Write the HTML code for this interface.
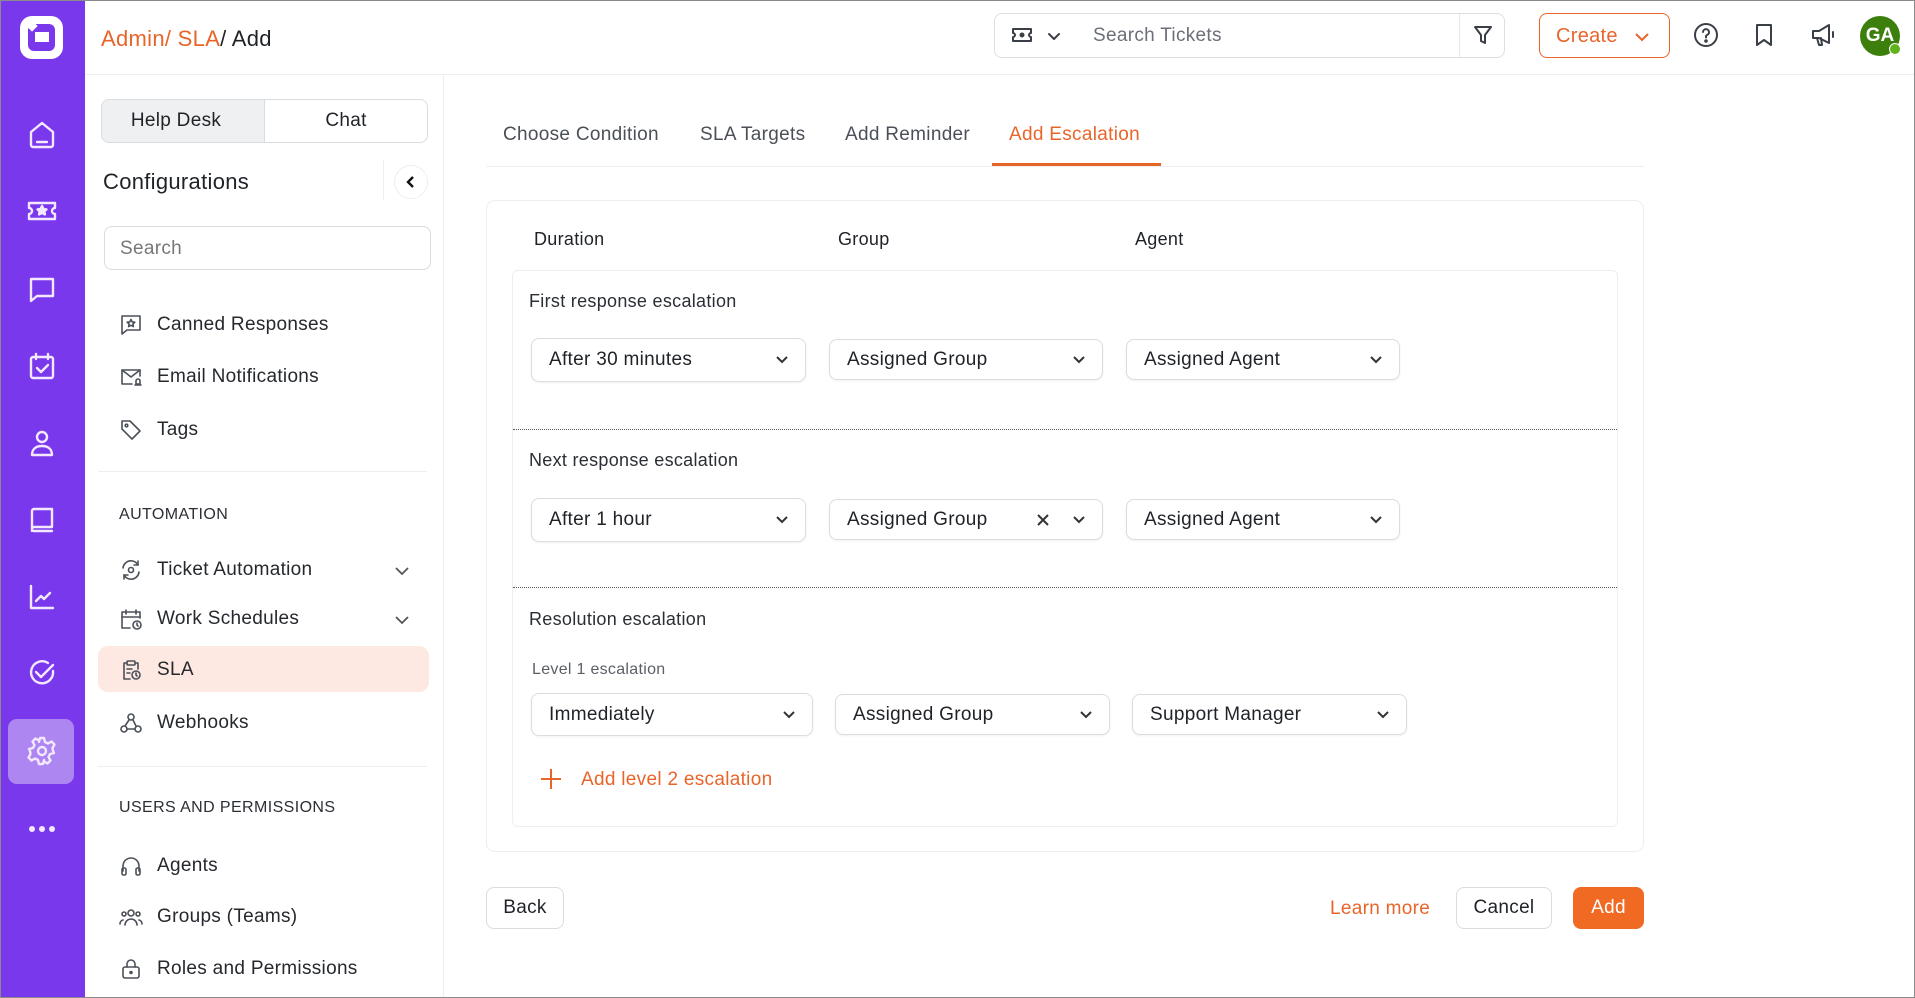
<!DOCTYPE html>
<html><head><meta charset="utf-8">
<style>
*{box-sizing:border-box;margin:0;padding:0}
body{width:1915px;height:998px;overflow:hidden;background:#fff;font-family:"Liberation Sans",Arial,sans-serif;color:#1f2328;position:relative;letter-spacing:.3px}
.a{position:absolute}
.side{left:0;top:0;width:85px;height:998px;background:#7a38ec}
.nav{left:22px;width:40px;height:40px}
.nav svg{width:40px;height:40px;fill:none;stroke:#f3e8ff;stroke-width:2.4;stroke-linecap:round;stroke-linejoin:round}
.txt{white-space:nowrap}
.dd{border:1px solid #d9dce1;border-radius:8px;box-shadow:0 1px 2px rgba(0,0,0,.06);font-size:19px;color:#1f2328;display:flex;align-items:center;padding-left:17px}
.dd svg{position:absolute;right:16px;top:50%;margin-top:-7px;width:14px;height:14px;fill:none;stroke:#333;stroke-width:2}
.item{left:119px;display:flex;align-items:center;font-size:19px;color:#25282d;height:30px;top:1px}
.item svg{width:24px;height:24px;margin-right:14px;fill:none;stroke:#4b5058;stroke-width:1.6;stroke-linecap:round;stroke-linejoin:round}
.sec{left:119px;font-size:16px;color:#2b2f35;letter-spacing:.4px}
.ic svg{fill:none;stroke:#3a3f47;stroke-width:2;stroke-linecap:round;stroke-linejoin:round}
</style></head><body>
<div class="a" style="left:0;top:0;width:1915px;height:998px;border:1px solid #8a8a8a;z-index:10;pointer-events:none"></div>
<div class="a side"></div>
<div class="a" style="left:20px;top:16px;width:43px;height:43px;background:#fff;border-radius:12px"></div>
<div class="a" style="left:28px;top:24px;width:27px;height:27px;background:#7a38ec;border-radius:6px"></div>
<div class="a" style="left:35px;top:32px;width:14px;height:10px;background:#fff"></div>
<div class="a" style="left:28px;top:22px;width:8px;height:8px;background:#fff;transform:rotate(45deg)"></div>
<div class="a nav" style="top:114px"><svg viewBox="0 0 40 40"><path d="M9 18L20 9l11 9v13a2 2 0 0 1-2 2H11a2 2 0 0 1-2-2z"/><path d="M15 28h10"/></svg></div>
<div class="a nav" style="top:191px"><svg viewBox="0 0 40 40"><path d="M7 12h26v5a3 3 0 0 0 0 6v5H7v-5a3 3 0 0 0 0-6z"/><path d="M20 15l1.5 3 3 .4-2.2 2 .6 3-2.9-1.5-2.9 1.5.6-3-2.2-2 3-.4z" fill="#f3e8ff"/></svg></div>
<div class="a nav" style="top:269px"><svg viewBox="0 0 40 40"><path d="M9 10h22v17H15l-6 5z"/></svg></div>
<div class="a nav" style="top:346px"><svg viewBox="0 0 40 40"><rect x="9" y="11" width="22" height="21" rx="2"/><path d="M14 8v5M26 8v5M15 22l4 4 7-7"/></svg></div>
<div class="a nav" style="top:423px"><svg viewBox="0 0 40 40"><circle cx="20" cy="14" r="5"/><path d="M10 32c0-6 4-9 10-9s10 3 10 9z"/></svg></div>
<div class="a nav" style="top:500px"><svg viewBox="0 0 40 40"><path d="M10 31V11a2 2 0 0 1 2-2h18v18H12a2 2 0 0 0 0 4h18"/></svg></div>
<div class="a nav" style="top:577px"><svg viewBox="0 0 40 40"><path d="M9 9v22h22"/><path d="M14 24l5-5 3 3 6-6"/></svg></div>
<div class="a nav" style="top:653px"><svg viewBox="0 0 40 40"><path d="M31 18a11 11 0 1 1-5-8"/><path d="M14 19l5 5 12-12"/></svg></div>
<div class="a" style="left:8px;top:719px;width:66px;height:65px;background:#ad86f2;border-radius:9px"></div>
<div class="a nav" style="top:731px"><svg viewBox="0 0 40 40"><circle cx="20" cy="20" r="4"/><path d="M18 7h4l1 4 3 1.5 3.5-2 3 3-2 3.5L31 20l0 0 1 2-4 1-1.5 3 2 3.5-3 3-3.5-2L22 29l-1 4h-4l-1-4-3-1.5-3.5 2-3-3 2-3.5L8 20l-1-2 4-1 1.5-3-2-3.5 3-3 3.5 2L17 11z"/></svg></div>
<div class="a" style="left:29px;top:826px;width:6px;height:6px;border-radius:3px;background:#f3e8ff;box-shadow:10px 0 #f3e8ff,20px 0 #f3e8ff"></div>

<div class="a txt" style="left:101px;top:26px;font-size:22px"><span style="color:#e8652a">Admin/ SLA</span>/ Add</div>
<div class="a" style="left:85px;top:74px;width:1830px;height:1px;background:#eceef0"></div>
<div class="a" style="left:443px;top:75px;width:1px;height:923px;background:#eceef0"></div>

<div class="a" style="left:994px;top:13px;width:511px;height:45px;border:1px solid #dcdfe3;border-radius:8px"></div>
<div class="a" style="left:1459px;top:14px;width:1px;height:43px;background:#e5e7ea"></div>
<div class="a ic" style="left:1011px;top:25px"><svg width="22" height="20" viewBox="0 0 22 20"><path d="M2 4h18v4a2 2 0 0 0 0 4v4H2v-4a2 2 0 0 0 0-4z"/><circle cx="11" cy="10" r="1.5" fill="#3a3f47"/></svg></div>
<div class="a ic" style="left:1047px;top:29px"><svg width="14" height="10" viewBox="0 0 14 10"><path d="M2 2l5 5 5-5"/></svg></div>
<div class="a txt" style="left:1093px;top:25px;font-size:19px;color:#6b7078">Search Tickets</div>
<div class="a ic" style="left:1472px;top:24px"><svg width="22" height="22" viewBox="0 0 22 22"><path d="M3 3h16l-6 8v8l-4-2v-6z"/></svg></div>
<div class="a" style="left:1539px;top:13px;width:131px;height:45px;border:1.5px solid #e8652a;border-radius:8px"></div>
<div class="a txt" style="left:1556px;top:25px;font-size:20px;color:#e8652a">Create</div>
<div class="a" style="left:1634px;top:29px"><svg width="16" height="10" viewBox="0 0 16 10"><path d="M2 2l6 6 6-6" fill="none" stroke="#e8652a" stroke-width="2"/></svg></div>
<div class="a ic" style="left:1692px;top:21px"><svg width="28" height="28" viewBox="0 0 28 28"><circle cx="14" cy="14" r="11"/><path d="M11 11a3 3 0 1 1 4 3c-1 .5-1 1-1 2.5"/><circle cx="14" cy="20" r=".8" fill="#3a3f47"/></svg></div>
<div class="a ic" style="left:1751px;top:22px"><svg width="26" height="26" viewBox="0 0 26 26"><path d="M6 3h14v20l-7-5-7 5z"/></svg></div>
<div class="a ic" style="left:1809px;top:21px"><svg width="28" height="28" viewBox="0 0 28 28"><path d="M4 10h6l10-6v18l-10-5H4z"/><path d="M8 17l2 7h3l-1-7M24 11v5"/></svg></div>
<div class="a" style="left:1860px;top:16px;width:40px;height:40px;border-radius:20px;background:#3d7f0c;color:#fff;font-size:19px;font-weight:bold;display:flex;align-items:center;justify-content:center;letter-spacing:0">GA</div>
<div class="a" style="left:1889px;top:43px;width:12px;height:12px;border-radius:6px;background:#5fb31c;border:1.5px solid #fff"></div>

<div class="a" style="left:101px;top:99px;width:327px;height:44px;border:1px solid #d9dce1;border-radius:8px;overflow:hidden;display:flex;font-size:19px">
<div style="width:163px;background:#eef0f2;border-right:1px solid #d9dce1;display:flex;align-items:center;justify-content:center;padding-right:14px">Help Desk</div>
<div style="flex:1;display:flex;align-items:center;justify-content:center">Chat</div></div>
<div class="a txt" style="left:103px;top:169px;font-size:22px">Configurations</div>
<div class="a" style="left:383px;top:160px;width:1px;height:40px;background:#eceef0"></div>
<div class="a" style="left:394px;top:165px;width:34px;height:34px;border-radius:17px;border:1px solid #eceef0;display:flex;align-items:center;justify-content:center"><svg width="12" height="14" viewBox="0 0 12 14"><path d="M8 2L3 7l5 5" fill="none" stroke="#111" stroke-width="2.4"/></svg></div>
<div class="a" style="left:104px;top:226px;width:327px;height:44px;border:1px solid #d9dce1;border-radius:8px;font-size:19px;color:#777;padding:11px 15px">Search</div>

<div class="a item" style="top:310px"><svg viewBox="0 0 24 24"><path d="M3 3h18v14H8l-5 4z"/><path d="M12 6.5l1.2 2.4 2.6.3-1.9 1.8.5 2.6-2.4-1.3-2.4 1.3.5-2.6-1.9-1.8 2.6-.3z"/></svg>Canned Responses</div>
<div class="a item" style="top:362px"><svg viewBox="0 0 24 24"><path d="M21 11V5H3v14h10"/><path d="M3 5l9 7 9-7"/><path d="M16 20h6M19 14a2 2 0 0 1 2 2v3h-4v-3a2 2 0 0 1 2-2z"/></svg>Email Notifications</div>
<div class="a item" style="top:415px"><svg viewBox="0 0 24 24"><path d="M3 3h8l10 10-8 8L3 11z"/><circle cx="7.5" cy="7.5" r="1.3"/></svg>Tags</div>
<div class="a" style="left:98px;top:471px;width:329px;height:1px;background:#eceef0"></div>
<div class="a sec txt" style="top:506px">AUTOMATION</div>
<div class="a item" style="top:555px"><svg viewBox="0 0 24 24"><path d="M4 10a8 8 0 0 1 15-3M20 14a8 8 0 0 1-15 3"/><path d="M19 3v4h-4M5 21v-4h4"/><circle cx="12" cy="12" r="2.5"/></svg>Ticket Automation</div>
<div class="a" style="left:394px;top:563px"><svg width="16" height="10" viewBox="0 0 16 10"><path d="M2 2l6 6 6-6" fill="none" stroke="#555" stroke-width="1.8"/></svg></div>
<div class="a item" style="top:604px"><svg viewBox="0 0 24 24"><path d="M11 21H3V5h18v6"/><path d="M3 10h18M7 3v4M17 3v4"/><circle cx="18" cy="18" r="4"/><path d="M18 16v2l1 1"/></svg>Work Schedules</div>
<div class="a" style="left:394px;top:612px"><svg width="16" height="10" viewBox="0 0 16 10"><path d="M2 2l6 6 6-6" fill="none" stroke="#555" stroke-width="1.8"/></svg></div>
<div class="a" style="left:98px;top:646px;width:331px;height:46px;background:#fde9e1;border-radius:10px"></div>
<div class="a item" style="top:655px"><svg viewBox="0 0 24 24"><path d="M11 21H5V5h3M16 5h3v6"/><rect x="8" y="3" width="8" height="4" rx="1"/><path d="M8 11h5M8 15h3"/><circle cx="17" cy="17" r="4"/><path d="M17 15v2l1 1"/></svg>SLA</div>
<div class="a item" style="top:708px"><svg viewBox="0 0 24 24"><circle cx="12" cy="6" r="3"/><circle cx="5" cy="18" r="3"/><circle cx="19" cy="18" r="3"/><path d="M10 9l-4 6M8 18h8M14 9l3 6"/></svg>Webhooks</div>
<div class="a" style="left:98px;top:766px;width:329px;height:1px;background:#eceef0"></div>
<div class="a sec txt" style="top:799px">USERS AND PERMISSIONS</div>
<div class="a item" style="top:851px"><svg viewBox="0 0 24 24"><path d="M4 17v-5a8 8 0 0 1 16 0v5"/><rect x="3" y="14" width="4" height="7" rx="1.5"/><rect x="17" y="14" width="4" height="7" rx="1.5"/></svg>Agents</div>
<div class="a item" style="top:902px"><svg viewBox="0 0 24 24"><circle cx="12" cy="8" r="3"/><path d="M6 20a6 6 0 0 1 12 0"/><circle cx="5" cy="9" r="2"/><circle cx="19" cy="9" r="2"/><path d="M1 19a4 4 0 0 1 3-4M23 19a4 4 0 0 0-3-4"/></svg>Groups (Teams)</div>
<div class="a item" style="top:954px"><svg viewBox="0 0 24 24"><rect x="4" y="10" width="16" height="11" rx="2"/><path d="M8 10V7a4 4 0 0 1 8 0v3"/><circle cx="12" cy="15.5" r="1"/></svg>Roles and Permissions</div>

<div class="a txt" style="left:503px;top:124px;font-size:19px;color:#4b5058">Choose Condition</div>
<div class="a txt" style="left:700px;top:124px;font-size:19px;color:#4b5058">SLA Targets</div>
<div class="a txt" style="left:845px;top:124px;font-size:19px;color:#4b5058">Add Reminder</div>
<div class="a txt" style="left:1009px;top:124px;font-size:19px;color:#e8652a">Add Escalation</div>
<div class="a" style="left:486px;top:166px;width:1158px;height:1px;background:#eceef0"></div>
<div class="a" style="left:992px;top:163px;width:169px;height:3px;background:#e8652a"></div>

<div class="a" style="left:486px;top:200px;width:1158px;height:652px;border:1px solid #eceef0;border-radius:9px"></div>
<div class="a txt" style="left:534px;top:229px;font-size:18px">Duration</div>
<div class="a txt" style="left:838px;top:229px;font-size:18px">Group</div>
<div class="a txt" style="left:1135px;top:229px;font-size:18px">Agent</div>
<div class="a" style="left:512px;top:270px;width:1106px;height:557px;border:1px solid #eceef0;border-radius:6px"></div>
<div class="a txt" style="left:529px;top:291px;font-size:18px;color:#2b2f35">First response escalation</div>
<div class="a dd" style="left:531px;top:338px;width:275px;height:44px">After 30 minutes<svg viewBox="0 0 14 14"><path d="M2 4l5 5 5-5"/></svg></div>
<div class="a dd" style="left:829px;top:339px;width:274px;height:41px">Assigned Group<svg viewBox="0 0 14 14"><path d="M2 4l5 5 5-5"/></svg></div>
<div class="a dd" style="left:1126px;top:339px;width:274px;height:41px">Assigned Agent<svg viewBox="0 0 14 14"><path d="M2 4l5 5 5-5"/></svg></div>
<div class="a" style="left:513px;top:429px;width:1104px;border-top:1px dotted #555"></div>
<div class="a txt" style="left:529px;top:450px;font-size:18px;color:#2b2f35">Next response escalation</div>
<div class="a dd" style="left:531px;top:498px;width:275px;height:44px">After 1 hour<svg viewBox="0 0 14 14"><path d="M2 4l5 5 5-5"/></svg></div>
<div class="a dd" style="left:829px;top:499px;width:274px;height:41px">Assigned Group<svg viewBox="0 0 14 14" style="right:52px"><path d="M2 2l10 10M12 2L2 12"/></svg><svg viewBox="0 0 14 14"><path d="M2 4l5 5 5-5"/></svg></div>
<div class="a dd" style="left:1126px;top:499px;width:274px;height:41px">Assigned Agent<svg viewBox="0 0 14 14"><path d="M2 4l5 5 5-5"/></svg></div>
<div class="a" style="left:513px;top:587px;width:1104px;border-top:1px dotted #555"></div>
<div class="a txt" style="left:529px;top:609px;font-size:18px;color:#2b2f35">Resolution escalation</div>
<div class="a txt" style="left:532px;top:661px;font-size:16px;color:#5a5f66">Level 1 escalation</div>
<div class="a dd" style="left:531px;top:693px;width:282px;height:43px">Immediately<svg viewBox="0 0 14 14"><path d="M2 4l5 5 5-5"/></svg></div>
<div class="a dd" style="left:835px;top:694px;width:275px;height:41px">Assigned Group<svg viewBox="0 0 14 14"><path d="M2 4l5 5 5-5"/></svg></div>
<div class="a dd" style="left:1132px;top:694px;width:275px;height:41px">Support Manager<svg viewBox="0 0 14 14"><path d="M2 4l5 5 5-5"/></svg></div>
<div class="a" style="left:540px;top:768px"><svg width="22" height="22" viewBox="0 0 22 22"><path d="M11 1v20M1 11h20" stroke="#e8652a" stroke-width="2"/></svg></div>
<div class="a txt" style="left:581px;top:769px;font-size:19px;color:#e8652a">Add level 2 escalation</div>

<div class="a" style="left:486px;top:887px;width:78px;height:42px;border:1px solid #d9dce1;border-radius:8px;font-size:19px;display:flex;align-items:center;justify-content:center">Back</div>
<div class="a txt" style="left:1330px;top:898px;font-size:19px;color:#e8652a">Learn more</div>
<div class="a" style="left:1456px;top:887px;width:96px;height:42px;border:1px solid #d9dce1;border-radius:8px;font-size:19px;display:flex;align-items:center;justify-content:center">Cancel</div>
<div class="a" style="left:1573px;top:887px;width:71px;height:42px;background:#f06a23;border-radius:8px;font-size:19px;color:#fff;display:flex;align-items:center;justify-content:center">Add</div>
</body></html>
